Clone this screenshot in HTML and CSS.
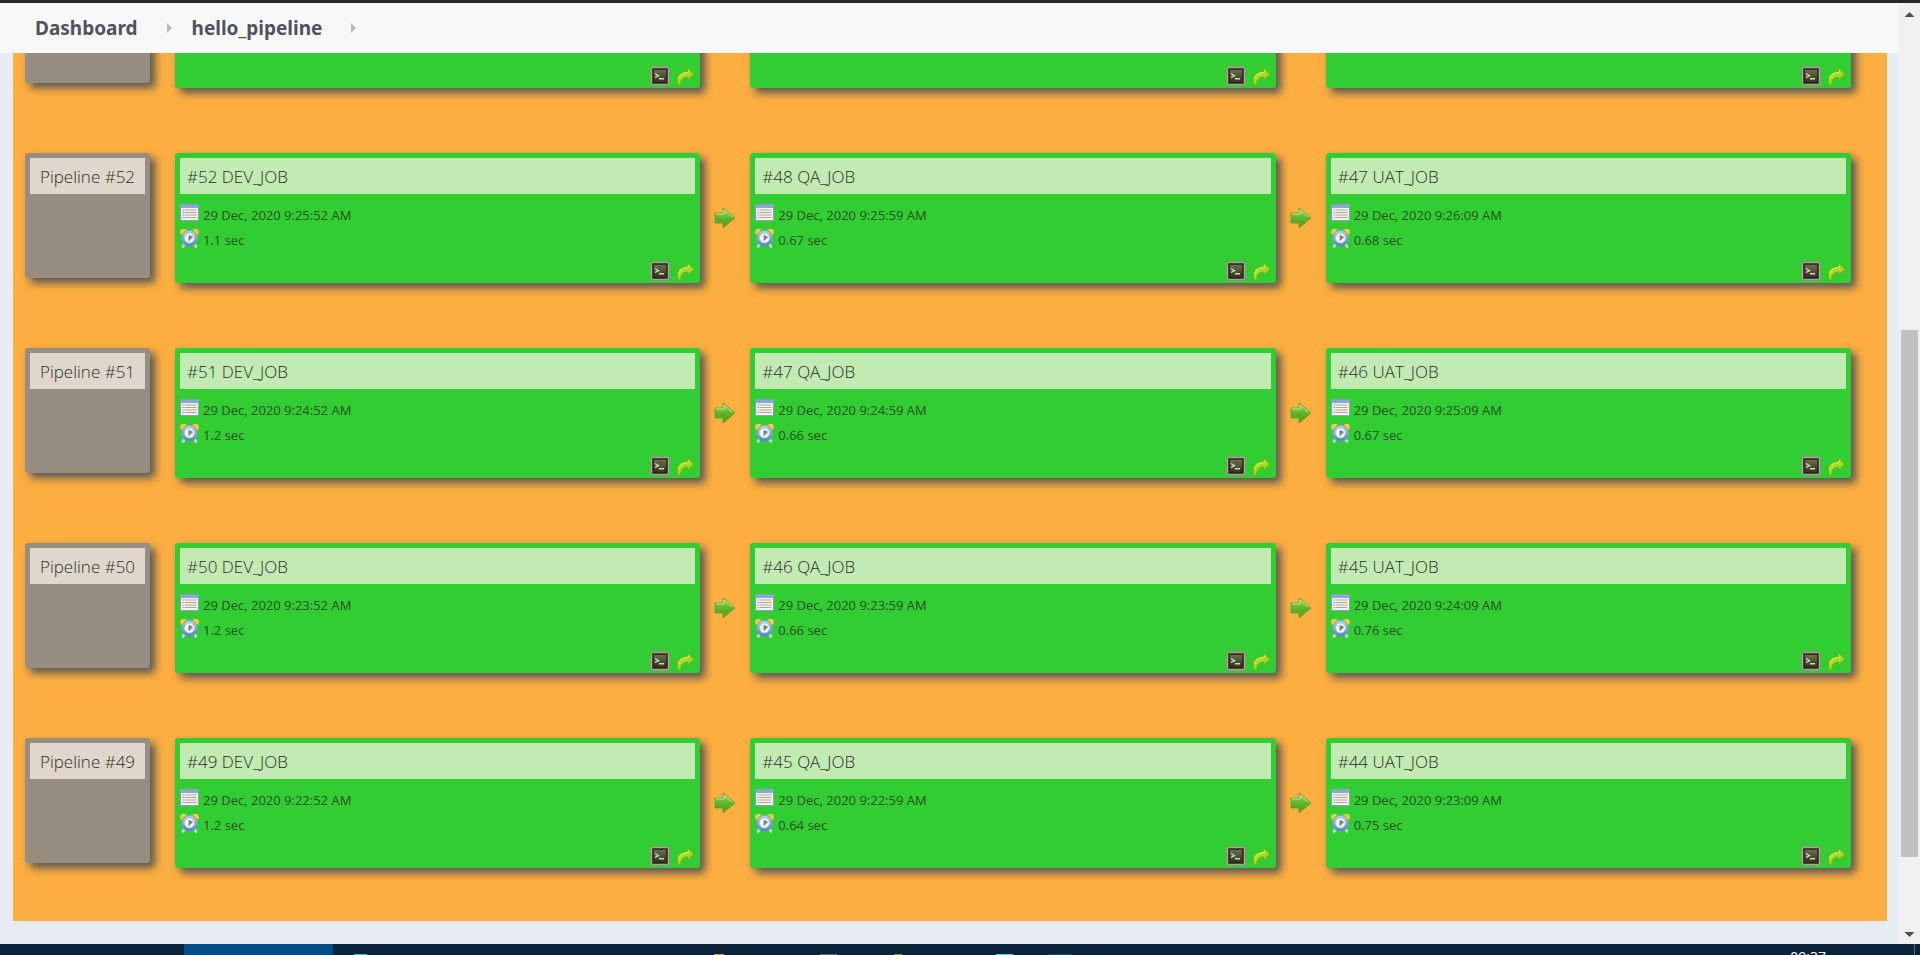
FILE: index.html
```html
<!DOCTYPE html>
<html lang="en">
<head>
<meta charset="utf-8">
<title>hello_pipeline</title>
<link rel="stylesheet" href="styles.css">
</head>
<body>
<svg class="sprite" aria-hidden="true">
  <defs>
    <linearGradient id="g-arrow" x1="0" y1="0" x2="0" y2="1"><stop offset="0" stop-color="#a4dc66"/><stop offset=".5" stop-color="#62b428"/><stop offset="1" stop-color="#4aa010"/></linearGradient>
    <linearGradient id="g-redo" x1="0" y1="0" x2="1" y2="1"><stop offset="0" stop-color="#b8e630"/><stop offset="1" stop-color="#93cf12"/></linearGradient>
    <linearGradient id="g-term" x1="0" y1="0" x2="0" y2="1"><stop offset="0" stop-color="#6f7450"/><stop offset="1" stop-color="#2f2e1b"/></linearGradient>
    <linearGradient id="g-clock" x1="0" y1="0" x2="0" y2="1"><stop offset="0" stop-color="#b4d0e8"/><stop offset="1" stop-color="#4f82b8"/></linearGradient>
  </defs>
  <symbol id="calendar" viewBox="0 0 19 17">
    <rect x=".5" y=".5" width="18" height="16" rx="1" fill="#f4f2ee" stroke="#8f9fb4"/>
    <path d="M1 1h17v3H1z" fill="#86a8d4"/>
    <path d="M2.500 6h2M2.500 8.500h2M2.500 11h2M2.500 13.500h2" stroke="#8fa6c4"/>
    <path d="M5 6h11.500M5 8.500h11.500M5 11h11.500M5 13.500h11.500" stroke="#b3a394"/>
  </symbol>
  <symbol id="clock" viewBox="0 0 19 19">
    <path d="M.8 5.500A3.800 3.800 0 0 1 6.500.5L2 6zM18.200 5.500A3.800 3.800 0 0 0 12.500.5L17 6z" fill="#f0d040" stroke="#d8a428" stroke-width=".7"/>
    <path d="M4.300 15.500l-1.300 2M14.700 15.500l1.300 2" stroke="#c8d2d6" stroke-width="2.800" stroke-linecap="round"/>
    <circle cx="9.500" cy="9.300" r="8" fill="url(#g-clock)" stroke="#6f9cc8" stroke-width=".6"/>
    <circle cx="9.500" cy="9" r="5" fill="#f4f6f8" stroke="#b4cade" stroke-width=".9"/>
    <path d="M9 6.500v5l3.500-3.500z" fill="#8b9096" stroke="#666c72" stroke-width=".8"/>
  </symbol>
  <symbol id="terminal" viewBox="0 0 20 20">
    <rect x=".8" y=".8" width="18.400" height="18.400" rx="2" fill="#bfc0ac" stroke="#8f8f7a" stroke-width="1.200"/>
    <rect x="3" y="3" width="14" height="14" fill="url(#g-term)" stroke="#29271c" stroke-width="1.600"/>
    <path d="M5 7.500l3.500 2.100L5 11.500M9 12.800h5" fill="none" stroke="#d5d8bd" stroke-width="1.400"/>
  </symbol>
  <symbol id="redo" viewBox="0 0 19 19">
    <path d="M2.500 18C-.8 11.500 3 4.500 11.500 4.500V1L18.200 7.300 11.500 13v-3C7.500 10 4 12.500 5 18z" fill="url(#g-redo)" stroke="#6fae14" stroke-width=".9" stroke-linejoin="round"/>
    <path d="M2.500 11.500C3.800 7.300 7 5.800 12.300 5.600V3.200" fill="none" stroke="#daf27c" stroke-width=".9"/>
  </symbol>
  <symbol id="next" viewBox="0 0 22 22">
    <path d="M1 6h8V1l12 10L9 21v-5H1z" fill="url(#g-arrow)" stroke="#6ba52c" stroke-linejoin="round"/>
    <path d="M2 7h8V3.200l8.500 7" fill="none" stroke="#c2e890"/>
  </symbol>
</svg>

<div class="window-edge"></div>
<div class="browser">
  <div class="page">
    <nav class="breadcrumbs" aria-label="Breadcrumb">
      <a href="#">Dashboard</a><span class="chevron"></span>
      <a href="#">hello_pipeline</a><span class="chevron"></span>
    </nav>
    <main class="scroll">
      <div class="board">
        <section class="row">
          <div class="card pipeline"></div>
          <article class="card build"><div class="actions"><button aria-label="Console"><svg class="i-term"><use href="#terminal"/></svg></button><button aria-label="Re-run"><svg class="i-redo"><use href="#redo"/></svg></button></div></article>
          <svg class="i-next"><use href="#next"/></svg>
          <article class="card build"><div class="actions"><button aria-label="Console"><svg class="i-term"><use href="#terminal"/></svg></button><button aria-label="Re-run"><svg class="i-redo"><use href="#redo"/></svg></button></div></article>
          <svg class="i-next"><use href="#next"/></svg>
          <article class="card build"><div class="actions"><button aria-label="Console"><svg class="i-term"><use href="#terminal"/></svg></button><button aria-label="Re-run"><svg class="i-redo"><use href="#redo"/></svg></button></div></article>
        </section>

        <section class="row">
          <div class="card pipeline"><h2 class="title">Pipeline #52</h2></div>
          <article class="card build">
            <a class="title" href="#">#52 DEV_JOB</a>
            <div class="meta"><svg class="i-cal"><use href="#calendar"/></svg>29 Dec, 2020 9:25:52 AM</div>
            <div class="meta"><svg class="i-clock"><use href="#clock"/></svg>1.1 sec</div>
            <div class="actions"><button aria-label="Console"><svg class="i-term"><use href="#terminal"/></svg></button><button aria-label="Re-run"><svg class="i-redo"><use href="#redo"/></svg></button></div>
          </article>
          <svg class="i-next"><use href="#next"/></svg>
          <article class="card build">
            <a class="title" href="#">#48 QA_JOB</a>
            <div class="meta"><svg class="i-cal"><use href="#calendar"/></svg>29 Dec, 2020 9:25:59 AM</div>
            <div class="meta"><svg class="i-clock"><use href="#clock"/></svg>0.67 sec</div>
            <div class="actions"><button aria-label="Console"><svg class="i-term"><use href="#terminal"/></svg></button><button aria-label="Re-run"><svg class="i-redo"><use href="#redo"/></svg></button></div>
          </article>
          <svg class="i-next"><use href="#next"/></svg>
          <article class="card build">
            <a class="title" href="#">#47 UAT_JOB</a>
            <div class="meta"><svg class="i-cal"><use href="#calendar"/></svg>29 Dec, 2020 9:26:09 AM</div>
            <div class="meta"><svg class="i-clock"><use href="#clock"/></svg>0.68 sec</div>
            <div class="actions"><button aria-label="Console"><svg class="i-term"><use href="#terminal"/></svg></button><button aria-label="Re-run"><svg class="i-redo"><use href="#redo"/></svg></button></div>
          </article>
        </section>

        <section class="row">
          <div class="card pipeline"><h2 class="title">Pipeline #51</h2></div>
          <article class="card build">
            <a class="title" href="#">#51 DEV_JOB</a>
            <div class="meta"><svg class="i-cal"><use href="#calendar"/></svg>29 Dec, 2020 9:24:52 AM</div>
            <div class="meta"><svg class="i-clock"><use href="#clock"/></svg>1.2 sec</div>
            <div class="actions"><button aria-label="Console"><svg class="i-term"><use href="#terminal"/></svg></button><button aria-label="Re-run"><svg class="i-redo"><use href="#redo"/></svg></button></div>
          </article>
          <svg class="i-next"><use href="#next"/></svg>
          <article class="card build">
            <a class="title" href="#">#47 QA_JOB</a>
            <div class="meta"><svg class="i-cal"><use href="#calendar"/></svg>29 Dec, 2020 9:24:59 AM</div>
            <div class="meta"><svg class="i-clock"><use href="#clock"/></svg>0.66 sec</div>
            <div class="actions"><button aria-label="Console"><svg class="i-term"><use href="#terminal"/></svg></button><button aria-label="Re-run"><svg class="i-redo"><use href="#redo"/></svg></button></div>
          </article>
          <svg class="i-next"><use href="#next"/></svg>
          <article class="card build">
            <a class="title" href="#">#46 UAT_JOB</a>
            <div class="meta"><svg class="i-cal"><use href="#calendar"/></svg>29 Dec, 2020 9:25:09 AM</div>
            <div class="meta"><svg class="i-clock"><use href="#clock"/></svg>0.67 sec</div>
            <div class="actions"><button aria-label="Console"><svg class="i-term"><use href="#terminal"/></svg></button><button aria-label="Re-run"><svg class="i-redo"><use href="#redo"/></svg></button></div>
          </article>
        </section>

        <section class="row">
          <div class="card pipeline"><h2 class="title">Pipeline #50</h2></div>
          <article class="card build">
            <a class="title" href="#">#50 DEV_JOB</a>
            <div class="meta"><svg class="i-cal"><use href="#calendar"/></svg>29 Dec, 2020 9:23:52 AM</div>
            <div class="meta"><svg class="i-clock"><use href="#clock"/></svg>1.2 sec</div>
            <div class="actions"><button aria-label="Console"><svg class="i-term"><use href="#terminal"/></svg></button><button aria-label="Re-run"><svg class="i-redo"><use href="#redo"/></svg></button></div>
          </article>
          <svg class="i-next"><use href="#next"/></svg>
          <article class="card build">
            <a class="title" href="#">#46 QA_JOB</a>
            <div class="meta"><svg class="i-cal"><use href="#calendar"/></svg>29 Dec, 2020 9:23:59 AM</div>
            <div class="meta"><svg class="i-clock"><use href="#clock"/></svg>0.66 sec</div>
            <div class="actions"><button aria-label="Console"><svg class="i-term"><use href="#terminal"/></svg></button><button aria-label="Re-run"><svg class="i-redo"><use href="#redo"/></svg></button></div>
          </article>
          <svg class="i-next"><use href="#next"/></svg>
          <article class="card build">
            <a class="title" href="#">#45 UAT_JOB</a>
            <div class="meta"><svg class="i-cal"><use href="#calendar"/></svg>29 Dec, 2020 9:24:09 AM</div>
            <div class="meta"><svg class="i-clock"><use href="#clock"/></svg>0.76 sec</div>
            <div class="actions"><button aria-label="Console"><svg class="i-term"><use href="#terminal"/></svg></button><button aria-label="Re-run"><svg class="i-redo"><use href="#redo"/></svg></button></div>
          </article>
        </section>

        <section class="row">
          <div class="card pipeline"><h2 class="title">Pipeline #49</h2></div>
          <article class="card build">
            <a class="title" href="#">#49 DEV_JOB</a>
            <div class="meta"><svg class="i-cal"><use href="#calendar"/></svg>29 Dec, 2020 9:22:52 AM</div>
            <div class="meta"><svg class="i-clock"><use href="#clock"/></svg>1.2 sec</div>
            <div class="actions"><button aria-label="Console"><svg class="i-term"><use href="#terminal"/></svg></button><button aria-label="Re-run"><svg class="i-redo"><use href="#redo"/></svg></button></div>
          </article>
          <svg class="i-next"><use href="#next"/></svg>
          <article class="card build">
            <a class="title" href="#">#45 QA_JOB</a>
            <div class="meta"><svg class="i-cal"><use href="#calendar"/></svg>29 Dec, 2020 9:22:59 AM</div>
            <div class="meta"><svg class="i-clock"><use href="#clock"/></svg>0.64 sec</div>
            <div class="actions"><button aria-label="Console"><svg class="i-term"><use href="#terminal"/></svg></button><button aria-label="Re-run"><svg class="i-redo"><use href="#redo"/></svg></button></div>
          </article>
          <svg class="i-next"><use href="#next"/></svg>
          <article class="card build">
            <a class="title" href="#">#44 UAT_JOB</a>
            <div class="meta"><svg class="i-cal"><use href="#calendar"/></svg>29 Dec, 2020 9:23:09 AM</div>
            <div class="meta"><svg class="i-clock"><use href="#clock"/></svg>0.75 sec</div>
            <div class="actions"><button aria-label="Console"><svg class="i-term"><use href="#terminal"/></svg></button><button aria-label="Re-run"><svg class="i-redo"><use href="#redo"/></svg></button></div>
          </article>
        </section>
      </div>
    </main>
  </div>
  <div class="scrollbar">
    <button class="up" aria-label="Scroll up"></button>
    <div class="track"><div class="thumb"></div></div>
    <button class="down" aria-label="Scroll down"></button>
  </div>
</div>
<footer class="taskbar">
  <div class="task-active"></div>
  <div class="task-icons">
    <svg viewBox="0 0 1400 11" preserveAspectRatio="xMinYMin slice" aria-hidden="true">
      <path d="M21 10.500h13" stroke="#35c4cc"/>
      <path d="M381 10.500h10" stroke="#e08a4a"/>
      <path d="M487 10.500h17" stroke="#5b6b7a"/>
      <path d="M561 10.500h8" stroke="#8f9a1c"/>
      <path d="M663 10.500h17" stroke="#4fd0ee"/>
      <path d="M716 10.500h24" stroke="#124a72"/>
    </svg>
  </div>
  <time class="time">09:37</time>
  <div class="peek"></div>
</footer>
</body>
</html>
```

FILE: styles.css
```css
* { box-sizing: border-box; }

body {
  margin: 0;
  height: 100vh;
  display: flex;
  flex-direction: column;
  overflow: hidden;
  background: #e7ecf4;
  color: #333;
  font-family: "Open Sans", "Noto Sans", sans-serif;
}

a { color: inherit; text-decoration: none; }
svg { display: block; flex: none; }
button { padding: 0; border: 0; background: none; }
.sprite { position: absolute; width: 0; height: 0; }

.window-edge { flex: none; height: 3px; background: #2b292b; }
.browser { flex: 1; min-height: 0; display: flex; }
.page { flex: 1; min-width: 0; display: flex; flex-direction: column; }

.breadcrumbs {
  flex: none;
  height: 50px;
  padding-left: 35px;
  display: flex;
  align-items: center;
  background: #f8f8f8;
  color: #4d545d;
  font-family: "Noto Sans", "Open Sans", sans-serif;
  font-size: 19px;
  font-weight: 700;
}
.chevron {
  margin: 0 20px 0 29px;
  border: solid transparent;
  border-width: 5px 0 5px 5px;
  border-left-color: #b8b8b8;
}

.scroll {
  flex: 1;
  min-height: 0;
  padding: 0 12px 23px 13px;
  display: flex;
  flex-direction: column;
  justify-content: flex-end;
  overflow: hidden;
}
.board {
  flex: none;
  padding: 0 36px 53px 12px;
  display: flex;
  flex-direction: column;
  gap: 65px;
  background: #fcae40;
}
.row {
  display: grid;
  grid-template-columns: 150px 1fr 50px 1fr 50px 1fr;
  align-items: start;
}
.card {
  padding: 5px;
  border-radius: 3px;
  box-shadow: 5px 5px 8px #555;
}
.pipeline { width: 125px; height: 125px; background: #978d80; }
.build {
  height: 130px;
  display: flex;
  flex-direction: column;
  background: #32cd32;
}
.title {
  margin: 0;
  height: 36px;
  padding: 0 7px;
  color: #2c2d24;
  background: #c2ebb4;
  font-size: 17px;
  font-weight: 300;
  line-height: 37px;
  white-space: nowrap;
}
.build .title { margin-bottom: 8px; }
.pipeline .title { padding: 0; background: #dfd7cc; text-align: center; }
.meta {
  height: 25px;
  display: flex;
  align-items: center;
  gap: 4px;
  color: #234f1c;
  font-size: 13px;
  line-height: 26px;
}
.i-cal { width: 19px; height: 17px; margin-bottom: 4px; }
.i-clock { width: 19px; height: 19px; margin-bottom: 3px; }
.actions {
  margin-top: auto;
  display: flex;
  justify-content: flex-end;
  align-items: center;
  gap: 6px;
}
.build .actions { margin-bottom: -3px; }
.i-term { width: 20px; height: 20px; }
.i-redo { width: 19px; height: 19px; }
.i-next { width: 22px; height: 22px; align-self: center; justify-self: center; }

.scrollbar {
  flex: none;
  width: 21px;
  padding: 9px 2px 7px;
  display: flex;
  flex-direction: column;
  align-items: center;
  background: #f0f0f0;
}
.up, .down { width: 10px; height: 5px; background: #505050; }
.up { clip-path: polygon(50% 0, 100% 100%, 0 100%); }
.down { clip-path: polygon(0 0, 100% 0, 50% 100%); }
.track {
  flex: 1;
  width: 100%;
  display: grid;
  grid-template-rows: 313fr 527fr 75fr;
}
.thumb { grid-row: 2; background: #c1c1c1; }

.taskbar {
  flex: none;
  height: 11px;
  padding-left: 184px;
  display: flex;
  align-items: flex-start;
  overflow: hidden;
  background: #0a2338;
}
.task-active { width: 149px; height: 11px; background: #044c86; }
.task-icons { flex: 1; min-width: 0; overflow: hidden; }
.task-icons svg { width: 1400px; height: 11px; }
.time {
  margin-right: 88px;
  padding-top: 3px;
  color: #fff;
  font-size: 14px;
  line-height: 20px;
}
.peek { width: 6px; height: 11px; border-left: 1px solid #5a6a78; }
```
